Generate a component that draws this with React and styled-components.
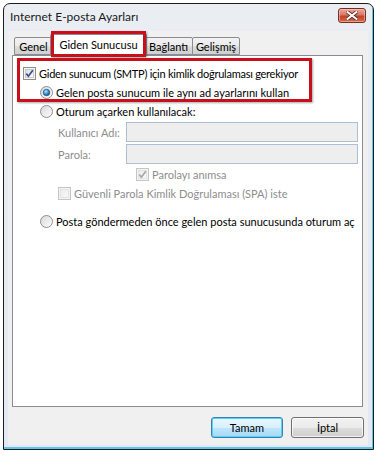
import React from 'react';
import styled, { createGlobalStyle } from 'styled-components';

const GlobalStyle = createGlobalStyle`
  body {
    margin: 0;
    background: #ffffff;
    font-family: Lato, "Open Sans", sans-serif;
    font-size: 11px;
    color: #000;
  }
`;

const Window = styled.div`
  position: relative;
  box-sizing: border-box;
  margin: 3px 0 0 3px;
  width: 371px;
  height: 447px;
  border: 1px solid #1c1c1c;
  border-radius: 7px 7px 0 0;
  background: linear-gradient(#eaeef3, #e2e9f2);
  box-shadow: inset -1px -2px 0 #5ac6ee;
  display: flex;
  flex-direction: column;
`;

const TitleBar = styled.div`
  height: 27px;
  display: flex;
  align-items: flex-start;
  justify-content: space-between;
  padding-left: 6px;
`;

const Title = styled.div`
  margin-top: 5px;
  font-size: 12px;
  color: #1a1a1a;
`;

const CloseButton = styled.div`
  margin: 4px 7px 0 0;
  width: 28px;
  height: 15px;
  box-sizing: border-box;
  border: 1px solid #7a2a1e;
  border-radius: 3px;
  background: linear-gradient(#e9a797 0%, #d7796a 45%, #c4412a 55%, #cf6a4e 100%);
  box-shadow: inset 0 0 0 1px rgba(255, 220, 210, 0.5);
  display: flex;
  align-items: center;
  justify-content: center;
`;

const Client = styled.div`
  flex: 1;
  margin: 0 5px 4px 4px;
  background: #f0f0f0;
  display: flex;
  flex-direction: column;
`;

const TabStrip = styled.div`
  height: 24px;
  display: flex;
  align-items: flex-end;
  padding-left: 6px;
`;

const Tab = styled.div`
  position: relative;
  box-sizing: border-box;
  height: ${p => (p.$active ? '22px' : '18px')};
  width: ${p => p.$w}px;
  margin: ${p => (p.$active ? '0 -2px -1px -3px' : '0 0 0 -1px')};
  z-index: ${p => (p.$active ? 2 : 1)};
  border: 1px solid #898c95;
  border-bottom: ${p => (p.$active ? 'none' : '1px solid #898c95')};
  border-radius: 2px 2px 0 0;
  background: ${p =>
    p.$active
      ? '#ffffff'
      : 'linear-gradient(#f2f2f2 0%, #ebebeb 50%, #dddddd 51%, #cfcfcf 100%)'};
  display: flex;
  align-items: center;
  justify-content: center;
  white-space: nowrap;
  padding-bottom: ${p => (p.$active ? '2px' : '0')};
  &:first-child {
    margin-left: 0;
  }
`;

const Panel = styled.div`
  position: relative;
  z-index: 1;
  box-sizing: border-box;
  margin-left: 4px;
  width: 351px;
  height: 352px;
  border: 1px solid #898c95;
  background: #ffffff;
  padding: 8px 0 0 10px;
  display: flex;
  flex-direction: column;
`;

const Row = styled.div`
  height: 19px;
  display: flex;
  align-items: center;
  gap: 3px;
  white-space: nowrap;
  letter-spacing: ${p => (p.$tight ? '-0.25px' : 'normal')};
  margin-left: ${p => p.$indent || 0}px;
  margin-top: ${p => p.$top || 0}px;
  color: ${p => (p.$disabled ? '#8d8d8d' : '#000')};
`;

const FieldRow = styled.div`
  height: 20px;
  display: flex;
  align-items: center;
  margin-left: 35px;
  margin-top: ${p => p.$top || 0}px;
`;

const FieldLabel = styled.div`
  width: 68px;
  color: #8d8d8d;
`;

const Input = styled.div`
  box-sizing: border-box;
  width: 232px;
  height: 20px;
  border: 1px solid #abbfd5;
  background: #eeeeee;
`;

const Footer = styled.div`
  display: flex;
  justify-content: flex-end;
  gap: 8px;
  padding: 10px 4px 0 0;
`;

const Button = styled.div`
  box-sizing: border-box;
  width: ${p => p.$w}px;
  height: 21px;
  border: 1px solid ${p => (p.$default ? '#3c7fb1' : '#707070')};
  border-radius: 3px;
  background: ${p =>
    p.$default
      ? 'linear-gradient(#eaf6fd 0%, #d9f0fc 50%, #bee6fd 51%, #a7d9f5 100%)'
      : 'linear-gradient(#f2f2f2 0%, #ebebeb 50%, #dddddd 51%, #cfcfcf 100%)'};
  box-shadow: inset 0 0 0 1px ${p => (p.$default ? '#4fd4f7' : 'rgba(255,255,255,0.7)')};
  display: flex;
  align-items: center;
  justify-content: center;
`;

const Highlight = styled.div`
  position: absolute;
  box-sizing: border-box;
  left: ${p => p.$x}px;
  top: ${p => p.$y}px;
  width: ${p => p.$w}px;
  height: ${p => p.$h}px;
  border: 3px solid #c8101c;
  box-shadow: 1px 1px 2px rgba(0, 0, 0, 0.35);
  z-index: 5;
  pointer-events: none;
`;

function CloseGlyph() {
  return (
    <svg width="12" height="9" viewBox="0 0 12 9">
      <path d="M1.5 1 L10.5 8 M10.5 1 L1.5 8" stroke="#5a2418" strokeWidth="3.6" strokeLinecap="square" />
      <path d="M1.5 1 L10.5 8 M10.5 1 L1.5 8" stroke="#ffffff" strokeWidth="2" strokeLinecap="square" />
    </svg>
  );
}

function CheckBox({ checked, disabled }) {
  const border = disabled ? '#c5c5c5' : '#8e8f8f';
  const mark = disabled ? '#a6a6a6' : '#3c4e8a';
  return (
    <svg width="13" height="13" viewBox="0 0 13 13">
      <defs>
        <linearGradient id={disabled ? 'cbd' : 'cbe'} x1="0" y1="0" x2="1" y2="1">
          <stop offset="0" stopColor={disabled ? '#ececec' : '#dcdcdc'} />
          <stop offset="1" stopColor={disabled ? '#f8f8f8' : '#ffffff'} />
        </linearGradient>
      </defs>
      <rect x="0.5" y="0.5" width="12" height="12" fill="#f4f4f4" stroke={border} />
      <rect x="2.5" y="2.5" width="8" height="8" fill={`url(#${disabled ? 'cbd' : 'cbe'})`} stroke={disabled ? '#dedede' : '#c0c0c0'} strokeWidth="0.8" />
      {checked && (
        <path d="M3.3 6.6 L5.4 9.2 L9.8 3.2" fill="none" stroke={mark} strokeWidth="1.7" />
      )}
    </svg>
  );
}

function Radio({ checked }) {
  return (
    <svg width="13" height="13" viewBox="0 0 13 13">
      <defs>
        <linearGradient id="rbg" x1="0" y1="0" x2="1" y2="1">
          <stop offset="0" stopColor="#d6d6d6" />
          <stop offset="1" stopColor="#ffffff" />
        </linearGradient>
        <radialGradient id="rdot" cx="0.4" cy="0.35" r="0.7">
          <stop offset="0" stopColor="#b9ecff" />
          <stop offset="0.5" stopColor="#3a94d6" />
          <stop offset="1" stopColor="#14467f" />
        </radialGradient>
      </defs>
      <circle cx="6.5" cy="6.5" r="6" fill="url(#rbg)" stroke="#8e8f8f" />
      {checked && <circle cx="6.5" cy="6.5" r="3.3" fill="url(#rdot)" stroke="#1d4f82" strokeWidth="0.6" />}
    </svg>
  );
}

export default function App() {
  return (
    <>
      <GlobalStyle />
      <Window>
        <TitleBar>
          <Title>Internet E-posta Ayarları</Title>
          <CloseButton>
            <CloseGlyph />
          </CloseButton>
        </TitleBar>

        <Client>
          <TabStrip>
            <Tab $w={39}>Genel</Tab>
            <Tab $w={97} $active>Giden Sunucusu</Tab>
            <Tab $w={49}>Bağlantı</Tab>
            <Tab $w={48}>Gelişmiş</Tab>
          </TabStrip>

          <Panel>
            <Row $tight>
              <CheckBox checked />
              <span>Giden sunucum (SMTP) için kimlik doğrulaması gerekiyor</span>
            </Row>
            <Row $indent={17}>
              <Radio checked />
              <span>Gelen posta sunucum ile aynı ad ayarlarını kullan</span>
            </Row>
            <Row $indent={17}>
              <Radio />
              <span>Oturum açarken kullanılacak:</span>
            </Row>
            <FieldRow $top={1}>
              <FieldLabel>Kullanıcı Adı:</FieldLabel>
              <Input />
            </FieldRow>
            <FieldRow $top={2}>
              <FieldLabel>Parola:</FieldLabel>
              <Input />
            </FieldRow>
            <Row $indent={113} $top={1} $disabled>
              <CheckBox checked disabled />
              <span>Parolayı anımsa</span>
            </Row>
            <Row $indent={35} $disabled>
              <CheckBox disabled />
              <span>Güvenli Parola Kimlik Doğrulaması (SPA) iste</span>
            </Row>
            <Row $indent={17} $top={9}>
              <Radio />
              <span>Posta göndermeden önce gelen posta sunucusunda oturum aç</span>
            </Row>
          </Panel>

          <Footer>
            <Button $w={72} $default>Tamam</Button>
            <Button $w={73}>İptal</Button>
          </Footer>
        </Client>

        <Highlight $x={47} $y={27} $w={95} $h={26} />
        <Highlight $x={13} $y={54} $w={295} $h={44} />
      </Window>
    </>
  );
}
